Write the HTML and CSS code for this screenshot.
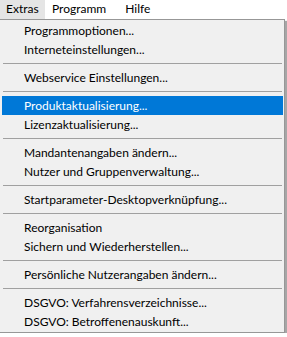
FILE: index.html
```html
<!DOCTYPE html>
<html>
<head>
<meta charset="utf-8">
<link rel="stylesheet" href="styles.css">
</head>
<body>
<div class="menubar">
  <span class="mb-item active">Extras</span>
  <span class="mb-item">Programm</span>
  <span class="mb-item">Hilfe</span>
</div>
<div class="popup-wrap">
  <div class="popup">
    <div class="item">Programmoptionen...</div>
    <div class="item">Interneteinstellungen...</div>
    <div class="sep"></div>
    <div class="item">Webservice Einstellungen...</div>
    <div class="sep"></div>
    <div class="item selected">Produktaktualisierung...</div>
    <div class="item">Lizenzaktualisierung...</div>
    <div class="sep"></div>
    <div class="item">Mandantenangaben ändern...</div>
    <div class="item">Nutzer und Gruppenverwaltung...</div>
    <div class="sep"></div>
    <div class="item">Startparameter-Desktopverknüpfung...</div>
    <div class="sep"></div>
    <div class="item">Reorganisation</div>
    <div class="item">Sichern und Wiederherstellen...</div>
    <div class="sep"></div>
    <div class="item">Persönliche Nutzerangaben ändern...</div>
    <div class="sep"></div>
    <div class="item">DSGVO: Verfahrensverzeichnisse...</div>
    <div class="item">DSGVO: Betroffenenauskunft...</div>
  </div>
</div>
</body>
</html>
```
FILE: styles.css
```css
html, body {
  margin: 0;
  padding: 0;
  background: #ffffff;
  font-family: "Lato", "Noto Sans", sans-serif;
  font-size: 12px;
  color: #000000;
}
.menubar {
  display: flex;
  height: 19px;
  background: #ffffff;
}
.mb-item {
  padding: 0 12px 0 7px;
  line-height: 18px;
  height: 19px;
}
.mb-item.active {
  background: #e5e5e5;
  box-sizing: border-box;
  width: 45px;
  padding-left: 6px;
}
.popup-wrap {
  display: flex;
  background: #ffffff;
}
.popup {
  width: 281px;
  border-top: 1px solid #979797;
  border-right: 1px solid #979797;
  border-bottom: 1px solid #979797;
  background: #f0f0f0;
  padding: 1px 1px 1px 2px;
  box-shadow: 2px 2px 1px rgba(0,0,0,0.35);
}
.item {
  height: 19px;
  line-height: 19px;
  padding-left: 22px;
  white-space: nowrap;
}
.item.selected {
  background: #0078d7;
  color: #ffffff;
}
.sep {
  height: 1px;
  margin: 4px 1px 4px 1px;
  background: #a0a0a0;
}
```
